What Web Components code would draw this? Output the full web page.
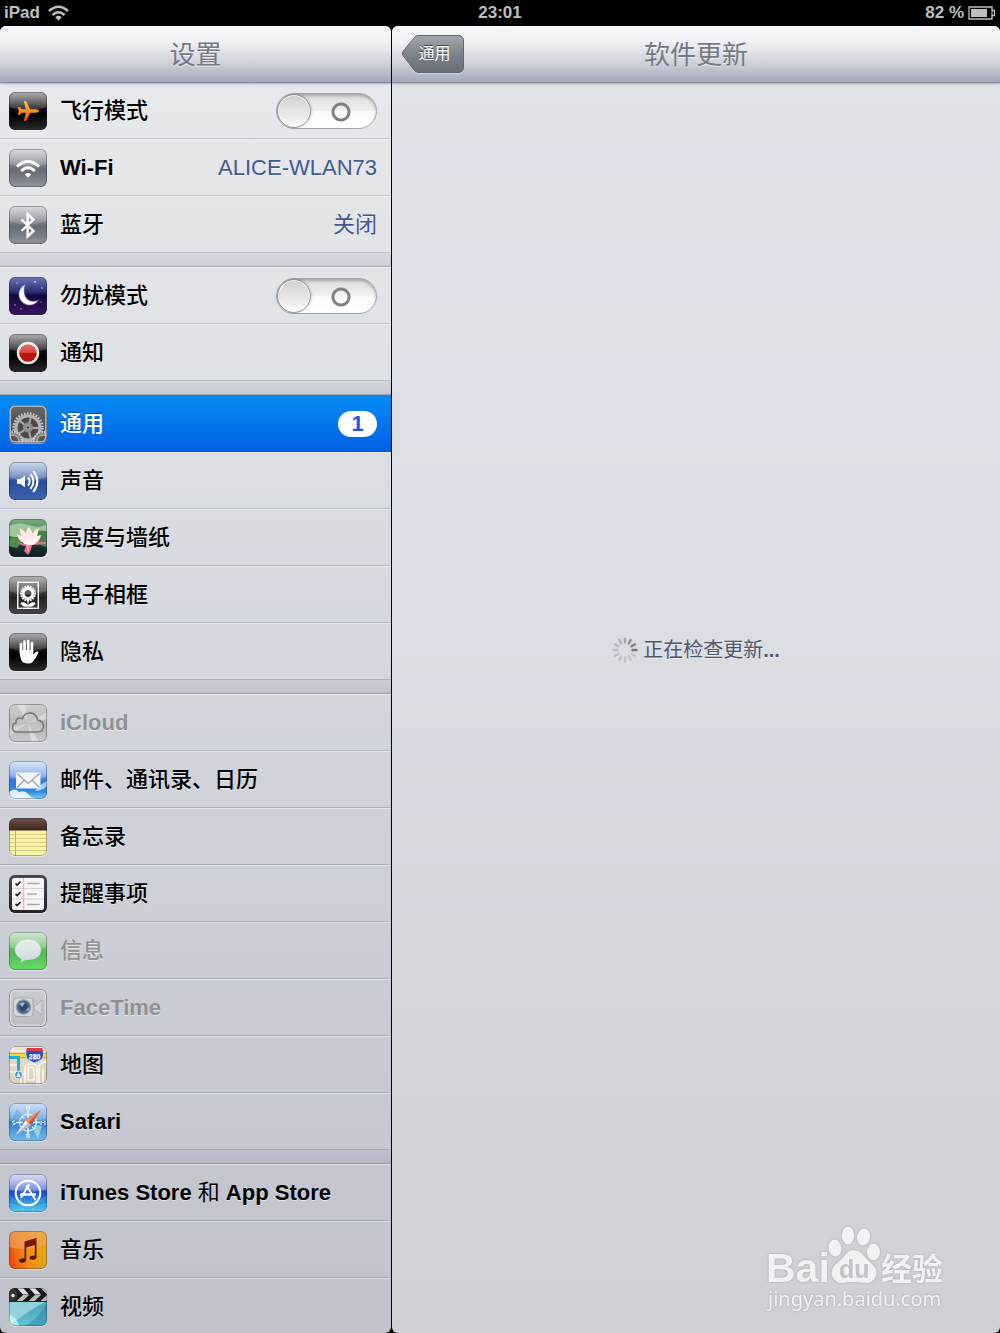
<!DOCTYPE html>
<html lang="zh-CN">
<head>
<meta charset="utf-8">
<title>设置</title>
<style>
  html, body { margin: 0; height: 100%; background: #000; }
  body { font-family: "Liberation Sans", "Noto Sans CJK SC", sans-serif; }
</style>
</head>
<body>
<settings-app></settings-app>

<script>
const define = (name, html, setup) => {
  const template = document.createElement('template');
  template.innerHTML = html;
  customElements.define(name, class extends HTMLElement {
    constructor() {
      super();
      this.attachShadow({ mode: 'open' }).append(template.content.cloneNode(true));
    }
    connectedCallback() { if (setup) setup(this, this.shadowRoot); }
  });
};

const grad = (id, ...stops) =>
  `<linearGradient id="${id}" x1="0" y1="0" x2="0" y2="1">${stops.map(([o, c]) => `<stop offset="${o}" stop-color="${c}"/>`).join('')}</linearGradient>`;
const tile = (...stops) => `<defs>${grad('bg', ...stops)}</defs><rect width="38" height="38" fill="url(#bg)"/>`;
const gloss = '<path d="M0 0H38V15Q19 22 0 15Z" fill="url(#gloss)"/>';
const black = tile([0, '#4a4a4a'], [.4, '#141414'], [.6, '#000'], [1, '#2a2a2a']);
const gray = tile([0, '#a9adb2'], [.42, '#7a7e86'], [.55, '#656a73'], [1, '#8f949b']);

const ray = (n, r1, r2, w, c) => Array.from({ length: n }, (_, i) =>
  `<path d="M0 ${-r1}V${-r2}" stroke="${c}" stroke-width="${w}" transform="rotate(${i * 360 / n})"/>`).join('');

const ICONS = {
  airplane: black + gloss + `<defs>${grad('o', [0, '#ffc34a'], [.5, '#f8931f'], [1, '#e04a00'])}</defs>
    <path fill="url(#o)" d="M30 19c0 1-1.6 1.7-3.4 1.7h-5.4L17 29h-2.2l2-8.3h-4L10.6 23H9l.8-4L9 15h1.6l2.2 2.3h4L14.800 9H17l4.200 8.300h5.400c1.800 0 3.400.7 3.400 1.700z"/>`,
  wifi: gray + gloss + `<g fill="none" stroke="#fff" stroke-width="3"><path d="M8 17.500Q19 7.500 30 17.500"/><path d="M12.200 22Q19 15.500 25.800 22"/></g><path d="M15.800 25.300Q19 22.600 22.200 25.300L19 28.800Z" fill="#fff"/>`,
  bluetooth: gray + gloss + `<path d="M12.500 13.500L24.500 25L18.600 30.500V8L24.500 13.500L12.500 25" fill="none" stroke="#fff" stroke-width="2.400"/>`,
  moon: tile([0, '#6d76b8'], [.4, '#2c2c70'], [.48, '#14093f'], [1, '#35145f']) +
    `<g fill="#c9cdf0"><circle cx="26" cy="5" r="1"/><circle cx="8" cy="6" r=".7"/><circle cx="33" cy="11" r=".8"/><circle cx="6" cy="28" r=".7"/><circle cx="12" cy="32" r=".7"/><circle cx="32" cy="25" r=".6"/></g>
     <path d="M15.500 8.500A10.300 10.300 0 1 0 28.500 24Q20 26.500 16.200 20Q13.500 14 15.500 8.500Z" fill="#fff" stroke="#fff" stroke-opacity=".35" stroke-width="1.500"/>`,
  notice: black + gloss + `<defs>${grad('r', [0, '#e27a75'], [.48, '#d8433f'], [.5, '#b81412'], [1, '#c01412'])}</defs><circle cx="19" cy="19" r="10" fill="url(#r)" stroke="#eee" stroke-width="2.400"/>`,
  gear: tile([0, '#686868'], [1, '#3a3a3a']) +
    `<g fill="none"><circle cx="19" cy="23" r="14.300" stroke="#c9c9c9" stroke-width="3" stroke-dasharray="1.600 1.395"/>
      <circle cx="19" cy="23" r="12" fill="#4b4b4b" stroke="#b4b4b4" stroke-width="3"/>
      <path d="M19 23L22 12M19 23H31M19 23L22 34M19 23L9 29M19 23L10 15" stroke="#aaa" stroke-width="2"/></g>
      <circle cx="19" cy="22.500" r="5" fill="#8e8e8e"/><circle cx="19" cy="22.500" r="1.600" fill="#333" stroke="#bbb" stroke-width=".8"/>
      <g fill="#777" stroke="#ccc" stroke-width="2.400" stroke-dasharray="1.500 1.200"><circle cx="4" cy="36" r="9"/><circle cx="34" cy="36" r="9"/></g>
      <g fill="#555" stroke="#aaa" stroke-width="1.500"><circle cx="4" cy="36" r="6"/><circle cx="34" cy="36" r="6"/></g>
      <rect x="1" y="1" width="36" height="36" rx="5" fill="none" stroke="#d4cfc9" stroke-width="1.600"/>`,
  sound: tile([0, '#8fa5d4'], [.42, '#5373b6'], [.5, '#2a4d9c'], [1, '#3e62ad']) + gloss +
    `<path d="M8 17h3.500L16 13.500V25.500L11.500 22H8Z" fill="#fff"/><g fill="none" stroke="#fff" stroke-width="2"><path d="M19 15.500Q22.500 19.500 19 23.500"/><path d="M21.500 12.200Q27.500 19.500 21.500 26.800"/><path d="M24.200 9Q32.500 19.500 24.200 30"/></g>`,
  lotus: tile([0, '#7fae84'], [.45, '#3c6a45'], [.75, '#16302c'], [1, '#0d1f22']) +
    `<path d="M0 7Q10 2 20 6T38 5V12Q27 10 18 15T0 17Z" fill="#9cc79a"/><path d="M0 20Q7 15 14 22L8 29Q3 28 0 27Z" fill="#4f8a4b"/><path d="M28 15L38 13V28Q31 27 27 22Z" fill="#4c7f4c"/>
     <path d="M16 25L8 23Q10 26 17 27L15 32L19 36L22 31L23 26L37 25Q38 22 30 23Z" fill="#e0718a"/>
     <path d="M19 26Q9 23 8 15L13 17Q10 12 11 9L17 14Q18 9 20 8L24 14Q27 9 30 10L28 17L32 16Q31 23 24 26Z" fill="#ffe9e4"/>
     <path d="M15 25Q12 21 12 17L17 22L19 15L22 22L27 17Q27 23 23 26Z" fill="#fff8ee"/><path d="M17 26L19 35L21 26Z" fill="#f29aaa"/>`,
  frame: tile([0, '#555'], [.45, '#383838'], [.55, '#222'], [1, '#454545']) + gloss +
    `<rect x="8.800" y="6.300" width="20.500" height="26" fill="none" stroke="#fff" stroke-width="1.400"/>
     <g transform="translate(19 17.500)">${ray(16, 5, 8, 2, '#fff')}<circle r="4.800" fill="none" stroke="#fff" stroke-width="2.600"/></g>
     <path d="M19 25V32M18.500 30Q13 31 12 27Q17 26 18.500 30M19.500 30Q25 31 26 27Q21 26 19.500 30" stroke="#fff" fill="#fff" stroke-width="1"/>`,
  hand: black + gloss + `<g stroke="#fff" stroke-width="2.700" stroke-linecap="round" fill="none"><path d="M12 20L12 11"/><path d="M15.500 19V8.700"/><path d="M19.200 19V8"/><path d="M22.800 20L23 10"/></g><path d="M10.700 17H24.200V21.500L27 18.800Q29.500 18 29.500 19.500Q27 25 23.500 29Q22.500 30.500 19 30.500Q14 30.500 12.300 27Q10.700 23 10.700 17Z" fill="#fff"/>`,
  cloud: tile([0, '#d0d1d3'], [.5, '#b4b6b9'], [1, '#c6c8ca']) +
    `<g fill="#fff" opacity=".38"><path d="M19 19L8 0H16ZM19 19L38 8V15ZM19 19L30 38H22ZM19 19L0 25V32Z"/></g><path d="M8.500 28Q3.500 28 3.500 23.500Q3.500 20 7 19Q6.500 14.500 10.500 14Q12.500 13.800 13.500 14.800Q15 9 21 9Q27.500 9.300 28.500 16Q34.500 17 34.500 22.500Q34 28 28.500 28Z" fill="#ddd" fill-opacity=".25" stroke="#77797d" stroke-width="1.500"/>`,
  mail: tile([0, '#a7c5f1'], [.42, '#6d9ce4'], [.5, '#3077d6'], [.8, '#2d8bdd'], [1, '#7bd3f5']) + gloss +
    `<path d="M0 31Q6 26 10 31Q16 29 19 33T28 38H0Z" fill="#fff" opacity=".85"/><path d="M26 30Q31 23 38 20V25Q33 30 26 30Z" fill="#d7ecff" opacity=".7"/>
     <rect x="7" y="11.500" width="24.500" height="16" rx="1" fill="#f4f5f7"/><path d="M8 12.500L19.200 22.500L30.500 12.500M8 26.500L15 19.500M30.500 26.500L23.500 19.500" fill="none" stroke="#9da2ab" stroke-width="1.200"/>`,
  notes: tile([0, '#f7f3a0'], [1, '#f9f4a8']) +
    `<g stroke="#d6cf82" stroke-width="1"><path d="M0 16.500H38M0 20.500H38M0 24.500H38M0 28.500H38M0 32.500H38"/></g><path d="M6.500 12V38" stroke="#dba86c" stroke-width="1"/><defs>${grad('b', [0, '#6d5148'], [1, '#3d2722'])}</defs><rect width="38" height="12" fill="url(#b)"/><path d="M0 12.500H38" stroke="#9a8f5a"/>`,
  reminders: tile([0, '#4c4c50'], [1, '#242427']) +
    `<rect x="3" y="3" width="32" height="32" rx="2.500" fill="#f5f5f5"/><path d="M3 13.500H35M3 24H35" stroke="#d5d5d5"/><path d="M14.500 3V35" stroke="#f3b6b6" stroke-width="1.400"/>
     <g stroke="#aaa" stroke-width="1.700" stroke-linecap="round"><path d="M19 8.500H30M19 19H27M19 29.500H30"/></g><g fill="none" stroke="#222" stroke-width="1.700"><path d="M6.500 8.500L8.200 10L11.500 6.500M6.500 19L8.200 20.500L11.500 17M6.500 29L8.200 30.500L11.500 27"/></g>`,
  messages: tile([0, '#9ccb9e'], [.45, '#6cbc6d'], [.55, '#55b857'], [1, '#66dd68']) + gloss +
    `<defs>${grad('w', [0, '#e8f0ec'], [1, '#cfd6df'])}</defs><path d="M19 7.500C26.500 7.500 32 11.800 32 18S26.500 28 19 28L16.500 27.800Q14.500 30 11 30.200Q12.500 28.500 12.300 26.600C8.500 25 6 22 6 18C6 11.800 11.500 7.500 19 7.500Z" fill="url(#w)"/>`,
  facetime: tile([0, '#c9cbcf'], [1, '#bcbdc0']) +
    `<rect x="1.500" y="1.500" width="35" height="35" rx="5" fill="none" stroke="#dcdddf" stroke-width="1.500"/><rect x="4.500" y="9" width="19.500" height="18.500" rx="3.500" fill="#d7d8da" stroke="#9fa1a5" stroke-width=".8"/><path d="M25 18L33 11V26L25 20Z" fill="#d4d5d8" stroke="#a5a7ab" stroke-width=".8"/>
     <circle cx="14.500" cy="18" r="7.800" fill="#9a9da3"/><circle cx="14.500" cy="18" r="6.500" fill="#4b6387"/><circle cx="14.500" cy="18" r="4" fill="#2f4668"/><path d="M10.500 15Q13 12 16 14L13 18ZM16 22L20 18V21Z" fill="#96b8dd"/>`,
  maps: tile([0, '#ebe3cf'], [1, '#d9cfb8']) +
    `<g fill="none" stroke="#f8f5ec" stroke-width="1.700"><path d="M0 5H17M4 0V11M0 19H8M0 26H8M12 38V28H17M16 38V23Q16 18 21 18H24Q28 18 28 23V38M30 38V20Q31 16 38 16M34 38V22M19 34V23Q20 21 22 21Q25 21 25 24V34Z"/></g>
     <path d="M0 9.500H38" stroke="#d59b11" stroke-width="5.500"/><path d="M0 9.500H38" stroke="#fbd33c" stroke-width="3.500"/><path d="M0 11.500H9.500V28" fill="none" stroke="#1bafe8" stroke-width="3"/><circle cx="9.500" cy="29" r="4" fill="#4b98df" stroke="#e4f1fb"/><path d="M9.500 26L11.500 31H7.500Z" fill="#fff"/>
     <path d="M18 2H33Q36 8 34 12Q32 15 25.500 17Q19 15 17.500 12Q15.500 8 18 2Z" fill="#2555c5" stroke="#e6edf6" stroke-width=".9"/><path d="M18 2H33L34.500 5H17Z" fill="#d83a49"/><text x="25.600" y="12.500" text-anchor="middle" font-family="Liberation Sans, sans-serif" font-weight="700" font-size="7" fill="#fff">280</text>`,
  safari: tile([0, '#94bdea'], [.45, '#5b9ce2'], [.5, '#2e80d5'], [1, '#74bbeb']) + gloss +
    `<path d="M3 18L8 6L15 14L11 23Z" fill="#4b90cd" opacity=".35"/><path d="M25 22L33 23L29 36L25 28Z" fill="#c3efd9" opacity=".6"/><g transform="translate(19 19.500)"><circle r="8.500" fill="none" stroke="#cfe6fa" stroke-width="1.400"/>${ray(4, 5, 12, 1.6, '#eaf5ff')}<g transform="rotate(45)">${ray(4, 6, 9, 1.2, '#eaf5ff')}</g></g>
     <g fill="none" stroke="#e9f5ff" stroke-width="1"><path d="M17.800 7V3L20.500 7V3M17.800 35V31L20.500 35V31M6 18Q3 17.500 3.500 19T6 20.500T3.500 22M32 22V18L34 20L36 18V22"/></g>
     <path d="M32 7L21.800 22L16.500 17.500Z" fill="#d95122"/><path d="M32 7L19.200 19.700L16.500 17.500Z" fill="#f08a55"/><path d="M6.500 32L21.800 22L16.500 17.500Z" fill="#eee"/><path d="M6.500 32L21.800 22L19.200 19.700Z" fill="#b9b9bd"/>`,
  appstore: tile([0, '#a9b0e6'], [.4, '#5d78dd'], [.46, '#1f45cc'], [.7, '#2488dc'], [1, '#4ccdf0']) + gloss +
    `<g opacity=".18" transform="translate(19 36)">${ray(20, 4, 22, 1, '#fff')}</g><circle cx="19" cy="19" r="12.300" fill="none" stroke="#fff" stroke-width="2"/><g fill="none" stroke="#fff" stroke-width="1.900"><path d="M20.300 10L12 24M17.500 11.500L26.500 26"/><path d="M11 20.500H27" stroke-width="2.300"/></g>`,
  music: `<defs><linearGradient id="bg" x1="0" y1="1" x2="1" y2=".7"><stop offset="0" stop-color="#ea3d0c"/><stop offset=".5" stop-color="#f08a16"/><stop offset="1" stop-color="#e2a90f"/></linearGradient>${grad('n', [0, '#8c1508'], [1, '#4b1a06'])}</defs><rect width="38" height="38" fill="url(#bg)"/><path d="M0 0H38V13Q20 21 0 16Z" fill="#f2a56c" opacity=".6"/>` +
    `<path d="M15.500 10.500L27.500 6.800V26.500Q27 28.800 23.500 28.800Q20.500 28.600 20.500 26.500Q21 24.300 25.800 24.400V14L17.200 16.500V29Q16.800 31.500 13 31.800Q9.800 31.500 10 29.300Q11 26.800 15.500 27.300Z" fill="url(#n)"/>`,
  video: tile([0, '#58b3c8'], [.5, '#4fa9be'], [1, '#62c6d6']) +
    `<path d="M0 38V14H36Q20 22 0 38Z" fill="#b2e5ea" opacity=".65"/><path d="M38 14V38H16Q30 30 38 14Z" fill="#237f9f" opacity=".45"/><path d="M0 38V26Q8 30 10 38Z" fill="#e2fafa" opacity=".7"/>
     <rect width="38" height="13.500" fill="#1a1a1a"/><g fill="#ddd"><path d="M8 0H14L20 6.500H14ZM20 0H26L32 6.500H26ZM32 0H38V6.500Z"/><path d="M14 7H20L13 13.500H7ZM26 7H32L25 13.500H19ZM38 7V13.500H31Z" fill="#bdbdbd"/></g><path d="M0 0H6L9 7L6 13.500H0Z" fill="#333"/><circle cx="4" cy="7.500" r="1.700" fill="#eee"/><path d="M0 13.500H38" stroke="#222"/>`
};

const iconTemplate = document.createElement('template');
iconTemplate.innerHTML = `
  <style>
    :host { display: block; flex: none; width: 38px; height: 38px; }
    svg { display: block; border-radius: 6px; box-shadow: 0 1px rgba(255,255,255,.45); }
  </style>
  <svg width="38" height="38" viewBox="0 0 38 38" aria-hidden="true"></svg>`;

customElements.define('app-icon', class extends HTMLElement {
  static observedAttributes = ['name'];
  constructor() {
    super();
    this.attachShadow({ mode: 'open' }).append(iconTemplate.content.cloneNode(true));
  }
  attributeChangedCallback(attribute, previous, name) {
    this.shadowRoot.querySelector('svg').innerHTML =
      '<defs><linearGradient id="gloss" x1="0" y1="0" x2="0" y2="1"><stop offset="0" stop-color="#fff" stop-opacity=".55"/><stop offset="1" stop-color="#fff" stop-opacity=".12"/></linearGradient></defs>' +
      (ICONS[name] || '') +
      '<rect x=".5" y=".5" width="37" height="37" rx="5.500" fill="none" stroke="#223" stroke-opacity=".35"/>';
  }
});

define('status-bar', `
  <style>
    :host { display: grid; grid-template-columns: 1fr auto 1fr; align-items: center; height: 26px; padding: 0 4px; color: #bfbfbf; font-size: 17px; font-weight: 700; line-height: 20px; }
    div { display: flex; align-items: center; gap: 8px; }
    .end { justify-content: flex-end; gap: 4px; }
    svg { display: block; }
  </style>
  <div><span>iPad</span>
    <svg width="21" height="16" viewBox="0 0 21 16" aria-hidden="true"><g fill="none" stroke="#bfbfbf" stroke-width="2.600"><path d="M1 6Q10.500 -2.500 20 6"/><path d="M4.500 10Q10.500 4.500 16.500 10"/></g><path d="M7.200 12.200Q10.500 9.300 13.800 12.200L10.500 15.800Z" fill="#bfbfbf"/></svg>
  </div>
  <time>23:01</time>
  <div class="end"><span>82 %</span>
    <svg width="28" height="14" viewBox="0 0 28 14" aria-hidden="true"><path d="M1 1H24V4.500H26.500V9.500H24V13H1Z" fill="none" stroke="#bfbfbf" stroke-width="1.300"/><path d="M24 4.500V9.500" stroke="#bfbfbf"/><rect x="3" y="3" width="16" height="8" fill="#bfbfbf"/></svg>
  </div>`);

define('pane-header', `
  <style>
    :host { display: grid; grid-template-columns: 1fr auto 1fr; align-items: center; flex: none; height: 56px; padding: 0 9px; position: relative; z-index: 1;
      background: linear-gradient(#f5f6f8, #f1f2f5 28%, #d3d5de 62%, #a5a9b9); box-shadow: 0 1px #7f859b, 0 2px 2px rgba(0,0,0,.25); }
    h1 { grid-column: 2; margin: 0; padding-top: 2px; font-size: 26px; line-height: 36px; font-weight: 400; color: #737a83; text-shadow: 0 1px rgba(255,255,255,.6); }
    ::slotted(*) { grid-column: 1; grid-row: 1; }
  </style>
  <slot name="back"></slot><h1><slot></slot></h1>`);

define('back-button', `
  <style>
    :host { display: block; }
    button { display: grid; align-items: center; justify-items: center; width: 63px; height: 39px; padding: 0; border: 0; background: none; color: #fff; font: 400 16px/24px "Liberation Sans", "Noto Sans CJK SC", sans-serif; text-shadow: 0 -1px rgba(0,0,0,.5); }
    svg, span { grid-area: 1 / 1; }
    span { padding-left: 4px; }
  </style>
  <button type="button">
    <svg width="63" height="39" viewBox="0 0 63 39" aria-hidden="true"><defs>${grad('b', [0, '#a4a8ae'], [.5, '#7d838b'], [1, '#666d77'])}</defs>
      <path d="M17 1.500H57Q62.500 1.500 62.500 7V33Q62.500 38.500 57 38.500H17Q14.500 38.500 12.500 35.500L2 21.500Q.5 19.500 2 17.500L12.500 4.500Q14.500 1.500 17 1.500Z" fill="#fff" opacity=".7"/>
      <path d="M17 .5H57Q62.500 .5 62.500 6V32Q62.500 37.500 57 37.500H17Q14.500 37.500 12.500 34.500L2 20.500Q.5 18.500 2 16.500L12.500 3.500Q14.500 .5 17 .5Z" fill="url(#b)" stroke="#5f656f"/></svg>
    <span><slot></slot></span>
  </button>`);

define('settings-group', `
  <style>
    :host { display: block; }
    :host(:not(:first-child))::before { content: ""; display: block; box-sizing: border-box; height: 14px; background: linear-gradient(rgba(150,150,175,.12), rgba(130,130,160,.24)); border-bottom: 1px solid rgba(70,75,95,.35); }
  </style>
  <slot></slot>`);

const rowStyle = `
    :host { display: block; }
    .row { display: flex; align-items: center; gap: 13px; box-sizing: border-box; width: 100%; height: 57px; margin: 0; padding: 0 14px 0 9px; border: 0; border-top: 1px solid rgba(255,255,255,.45); border-bottom: 1px solid rgba(60,70,90,.24); background: none; color: #000; font: 500 22px/32px "Liberation Sans", "Noto Sans CJK SC", sans-serif; text-align: left; text-shadow: 0 1px rgba(255,255,255,.5); }
    .label { flex: 1; white-space: nowrap; }`;

define('settings-row', `
  <style>${rowStyle}
    :host([latin]) .row { font-weight: 700; }
    .row:disabled { color: #8f9194; }
    .value { color: #40598f; font-weight: 400; }
    ::slotted(span) { font-weight: 400; }
    :host([selected]) .row { color: #fff; text-shadow: 0 -1px rgba(0,0,0,.4); background: linear-gradient(#058df4, #0160e6); border-top-color: #2a7cc0; border-bottom-color: #0053cf; }
    .badge { min-width: 39px; border-radius: 13px; background: #fff; color: #2457e8; font-weight: 700; line-height: 26px; text-align: center; text-shadow: none; }
    [hidden] { display: none; }
  </style>
  <button type="button" class="row"><app-icon></app-icon><span class="label"><slot></slot></span><span class="value" hidden></span><span class="badge" hidden></span></button>`,
  (host, root) => {
    root.querySelector('app-icon').setAttribute('name', host.getAttribute('icon'));
    for (const part of ['value', 'badge']) {
      const text = host.getAttribute(part);
      const el = root.querySelector('.' + part);
      if (text) { el.textContent = text; el.hidden = false; }
    }
    root.querySelector('button').disabled = host.hasAttribute('disabled');
    if (host.hasAttribute('selected')) root.querySelector('button').setAttribute('aria-current', 'page');
  });

define('toggle-row', `
  <style>${rowStyle}
    input { appearance: none; flex: none; width: 101px; height: 36px; margin: 0; border-radius: 18px; border: 1px solid #a6a6a8;
      background:
        radial-gradient(circle at 64px 18px, transparent 6px, #828282 7px, #828282 9px, transparent 10px),
        linear-gradient(#dcdcdc, #f0f0f0 48%, #fbfbfb 52%, #fff);
      box-shadow: inset 0 2px 3px rgba(0,0,0,.25); }
    input::before { content: ""; display: block; box-sizing: border-box; width: 34px; height: 34px; border: 1px solid #919193; border-radius: 50%; background: linear-gradient(#cfcfcf, #fafafa); box-shadow: inset 0 0 0 1px rgba(255,255,255,.7), 1px 0 2px rgba(0,0,0,.15); }
    input:checked::before { margin-left: auto; }
  </style>
  <div class="row"><app-icon></app-icon><label class="label" for="toggle"><slot></slot></label><input id="toggle" type="checkbox" role="switch"></div>`,
  (host, root) => root.querySelector('app-icon').setAttribute('name', host.getAttribute('icon')));

define('activity-spinner', `
  <style>:host { display: block; } svg { display: block; }</style>
  <svg width="26" height="26" viewBox="-13 -13 26 26" aria-hidden="true">${
    [.5, .75, .9, 1, .24, .24, .26, .28, .3, .33, .37, .42].map((o, i) =>
      `<path d="M0 -7.500V-11.500" stroke="#777" stroke-width="2.400" stroke-linecap="round" opacity="${o}" transform="rotate(${i * 30})"/>`).join('')
  }</svg>`);

define('baidu-watermark', `
  <style>:host { display: block; } svg { display: block; overflow: visible; filter: drop-shadow(0 0 1px rgba(120,122,135,.55)); }</style>
  <svg width="180" height="88" viewBox="0 0 180 88" role="img" aria-label="Baidu 经验">
    <g fill="#f1f2f4">
      <text x="0" y="57" font-family="Liberation Sans, sans-serif" font-weight="700" font-size="41">Bai</text>
      <ellipse cx="69" cy="23" rx="6.500" ry="8.500" transform="rotate(-8 69 23)"/><ellipse cx="82" cy="10.500" rx="6.300" ry="9"/><ellipse cx="97.500" cy="12" rx="6.500" ry="8.500" transform="rotate(14 97.500 12)"/><ellipse cx="107.500" cy="27" rx="6.500" ry="8.500"/>
      <path d="M88 25Q94 25 98 31Q101 35 106 39Q112 45 110 51Q107 59 98 58Q88 56 78 58Q69 59 66 51Q64 44 71 38Q76 34 79 30Q83 25 88 25Z"/>
      <text x="115" y="55" font-family="Noto Sans CJK SC, sans-serif" font-weight="700" font-size="31">经验</text>
      <text x="2" y="81" font-family="Noto Sans, sans-serif" font-size="20">jingyan.baidu.com</text>
    </g>
    <text x="73" y="53" font-family="Liberation Sans, sans-serif" font-weight="700" font-size="25" fill="#c2c4cb">du</text>
  </svg>`);

define('settings-app', `
  <style>
    :host { display: flex; flex-direction: column; height: 100vh; }
    main { flex: 1; min-height: 0; display: grid; grid-template-columns: minmax(300px, 391px) 1fr; gap: 1px; }
    .pane { display: flex; flex-direction: column; min-height: 0; overflow: hidden; border-radius: 6px; }
    .side { background: linear-gradient(#e9eaed, #dfe2e6 24%, #d4d7dd 48%, #c9ccd4 75%, #bfc2cb); }
    .detail { position: relative; background: linear-gradient(#e0e4e9, #dcdfe5 40%, #d4d6dc 75%, #d0d1d7); }
    nav { flex: 1; min-height: 0; overflow-y: auto; scrollbar-width: none; }
    .body { flex: 1; display: flex; align-items: center; justify-content: center; gap: 5px; padding-bottom: 116px; color: #4d566b; font-size: 20px; line-height: 28px; text-shadow: 0 1px rgba(255,255,255,.6); }
    p { margin: 0; font-weight: 400; }
    baidu-watermark { position: absolute; right: 54px; bottom: 20px; }
  </style>
  <status-bar></status-bar>
  <main>
    <section class="pane side">
      <pane-header>设置</pane-header>
      <nav>
        <settings-group>
          <toggle-row icon="airplane">飞行模式</toggle-row>
          <settings-row icon="wifi" latin value="ALICE-WLAN73">Wi-Fi</settings-row>
          <settings-row icon="bluetooth" value="关闭">蓝牙</settings-row>
        </settings-group>
        <settings-group>
          <toggle-row icon="moon">勿扰模式</toggle-row>
          <settings-row icon="notice">通知</settings-row>
        </settings-group>
        <settings-group>
          <settings-row icon="gear" selected badge="1">通用</settings-row>
          <settings-row icon="sound">声音</settings-row>
          <settings-row icon="lotus">亮度与墙纸</settings-row>
          <settings-row icon="frame">电子相框</settings-row>
          <settings-row icon="hand">隐私</settings-row>
        </settings-group>
        <settings-group>
          <settings-row icon="cloud" latin disabled>iCloud</settings-row>
          <settings-row icon="mail">邮件、通讯录、日历</settings-row>
          <settings-row icon="notes">备忘录</settings-row>
          <settings-row icon="reminders">提醒事项</settings-row>
          <settings-row icon="messages" disabled>信息</settings-row>
          <settings-row icon="facetime" latin disabled>FaceTime</settings-row>
          <settings-row icon="maps">地图</settings-row>
          <settings-row icon="safari" latin>Safari</settings-row>
        </settings-group>
        <settings-group>
          <settings-row icon="appstore" latin>iTunes Store <span>和</span> App Store</settings-row>
          <settings-row icon="music">音乐</settings-row>
          <settings-row icon="video">视频</settings-row>
        </settings-group>
      </nav>
    </section>
    <section class="pane detail">
      <pane-header><back-button slot="back">通用</back-button>软件更新</pane-header>
      <div class="body" role="status"><activity-spinner></activity-spinner><p>正在检查更新<b>...</b></p></div>
      <baidu-watermark></baidu-watermark>
    </section>
  </main>`);
</script>
</body>
</html>
